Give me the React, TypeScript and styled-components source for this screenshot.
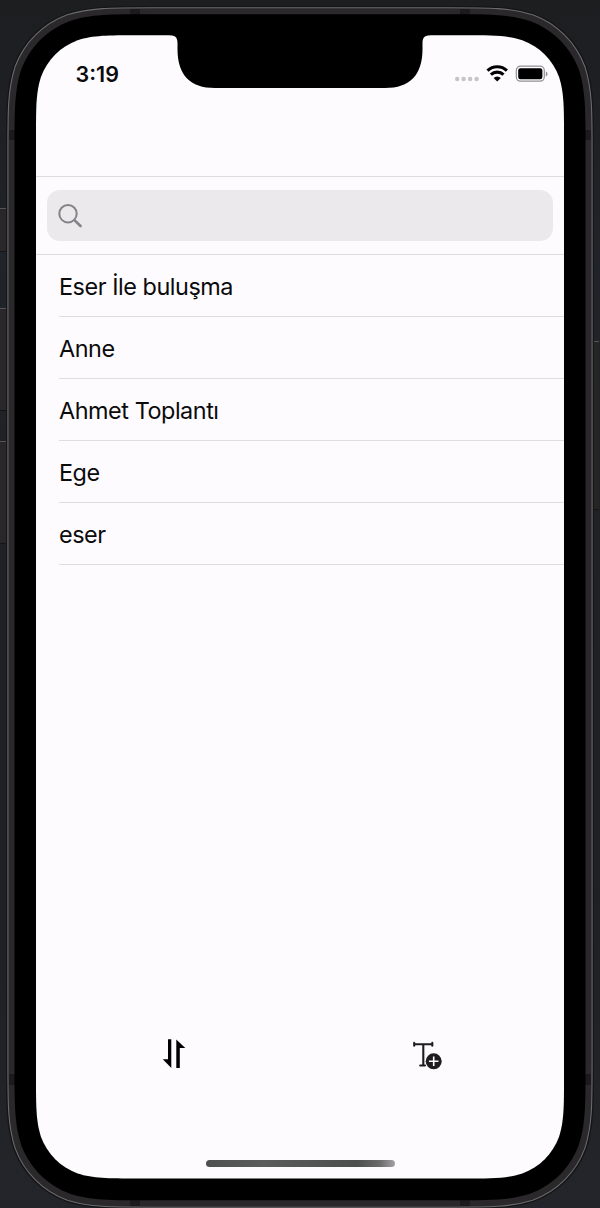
import React from "react";
import styled, { createGlobalStyle } from "styled-components";

const GlobalStyle = createGlobalStyle`
  * { box-sizing: border-box; }
  body { margin: 0; background: #202124; font-family: Inter, "Liberation Sans", sans-serif; }
`;

const Stage = styled.main`
  position: relative;
  display: flex;
  justify-content: center;
  width: 600px;
  height: 1208px;
  padding: 35px 36px 30px;
  overflow: hidden;
  background: linear-gradient(180deg, #1d1e20 0, #1e2023 120px, #202329 260px, #202124 560px, #1f2023 900px, #23252a 1208px);
`;

const Hardware = styled.svg`
  position: absolute;
  inset: 0;
`;

const Screen = styled.div`
  position: relative;
  display: flex;
  flex-direction: column;
  width: 528px;
  color: #0b0b0c;
`;

const StatusBar = styled.header`
  display: flex;
  justify-content: space-between;
  height: 141px;
  padding: 27px 16px 0 39.5px;
`;

const Time = styled.time`
  font-size: 21.5px;
  font-weight: 600;
  line-height: 24px;
`;

const SearchArea = styled.div`
  height: 79px;
  padding: 13.4px 11px;
  border-top: 1px solid #dedcdf;
  border-bottom: 1px solid #dedcdf;
`;

const SearchField = styled.div`
  display: flex;
  align-items: center;
  height: 50.5px;
  padding-left: 10px;
  border-radius: 13px;
  background: #ebe9eb;
`;

const List = styled.ul`
  flex: 1;
  margin: 0;
  padding: 0 0 0 23px;
  list-style: none;
`;

const Item = styled.li`
  display: flex;
  align-items: center;
  height: 62px;
  padding-top: 2px;
  border-bottom: 1px solid #dfdde0;
  font-size: 23.4px;
  letter-spacing: -0.45px;
`;

const Toolbar = styled.nav`
  display: flex;
  height: 121px;
  padding: 0 11px;
`;

const ToolButton = styled.button`
  display: flex;
  flex: 1;
  justify-content: center;
  align-items: flex-start;
  padding: 0;
  border: 0;
  background: none;
`;

const HomeIndicator = styled.div`
  align-self: center;
  width: 189px;
  height: 7px;
  margin-bottom: 11px;
  border-radius: 4px;
  background: linear-gradient(90deg, #4e504f, #5a5c5b 30%, #4c4e4d 80%, #6b6b6c 92%, #a3a2a4);
`;

const meetings = ["Eser İle buluşma", "Anne", "Ahmet Toplantı", "Ege", "eser"];

/** Rounded rectangle whose corners ease into the straight edges. */
function smoothRect(l: number, t: number, r: number, b: number, radius: number) {
  const corner = [
    [1.5287, 0], [1.0885, 0], [0.8684, 0], [0.6315, 0.0749],
    [0.3728, 0.1691], [0.1691, 0.3728], [0.0749, 0.6315],
    [0, 0.8684], [0, 1.0885], [0, 1.5287],
  ];
  const place = (points: number[][], x: number, y: number, sx: number, sy: number) =>
    points.map(([px, py]) => `${(x + sx * px * radius).toFixed(2)} ${(y + sy * py * radius).toFixed(2)}`);
  const back = [...corner].reverse();
  const runs = [
    place(corner, l, t, 1, 1),
    place(back, l, b, 1, -1),
    place(corner, r, b, -1, -1),
    place(back, r, t, -1, 1),
  ];
  return runs.map((p, i) => `${i ? "L" : "M"}${p[0]}C${p.slice(1).join(" ")}`).join("") + "Z";
}

function PhoneBody() {
  return (
    <Hardware width="600" height="1208" viewBox="0 0 600 1208">
      <g fill="#292729">
        <path d="M0 208H7V251H0ZM0 308H7V411H0ZM0 441H7V543H0Z" />
        <path d="M593 341H599V509H593Z" fill="#252524" />
      </g>
      <path d="M0 208.500H7M0 308.500H7M0 441.500H7M593 341.500H599" stroke="#555557" />
      <path d="M0 251.500H7M0 410.500H7M0 543.500H7M593 509.500H599" stroke="#151517" />
      <path d={smoothRect(7.5, 7.5, 592.5, 1207.5, 94)} fill="#2a282a" stroke="#141517" strokeWidth="3" />
      <path d={smoothRect(7.9, 7.7, 592.1, 1207.2, 94)} fill="#2a282a" stroke="#6b6b6c" strokeWidth="1.100" />
      <path
        d="M130 9H140V15H130ZM460 9H470V15H460ZM130 1200H140V1206H130ZM460 1200H470V1206H460ZM9 130H15V140H9ZM585 130H591V140H585ZM9 1074H15V1085H9ZM585 1074H591V1085H585Z"
        fill="#1c1a1c"
      />
      <path d={smoothRect(14.5, 14.3, 585.5, 1200.3, 88)} />
      <path d={smoothRect(36, 35.3, 564, 1178.4, 66)} fill="#fdfbfe" />
      <path d="M170 34V35.300C175 35.300 177.500 37.500 177.500 43V49C177.500 75 190 88 215 88H385C410 88 422.500 75 422.500 49V43C422.500 37.500 425 35.300 430 35.300V34Z" />
    </Hardware>
  );
}

export default function App() {
  return (
    <Stage>
      <GlobalStyle />
      <PhoneBody />
      <Screen>
        <StatusBar>
          <Time>3:19</Time>
          <svg width="94" height="24" viewBox="0 0 94 24">
            <g fill="#c6c4c7">
              <circle cx="3.200" cy="17" r="2.200" />
              <circle cx="9.600" cy="17" r="2.200" />
              <circle cx="16.100" cy="17" r="2.200" />
              <circle cx="22.600" cy="17" r="2.200" />
            </g>
            <g fill="none" stroke="#000" strokeWidth="3.100">
              <path d="M33.500 8.700A14 14 0 0 1 52.900 8.700" />
              <path d="M36.900 12.700A9 9 0 0 1 49.500 12.700" />
            </g>
            <path d="M43.200 19.600L39.600 16A4.900 4.900 0 0 1 46.800 16Z" />
            <rect x="62.300" y="4.200" width="28" height="15" rx="4.200" fill="none" stroke="#929193" strokeWidth="1.200" />
            <rect x="64.200" y="6.300" width="24.200" height="10.900" rx="2.300" />
            <path d="M91.800 9.400c2.300.8 2.300 4.200 0 5z" fill="#929193" />
          </svg>
        </StatusBar>
        <SearchArea>
          <SearchField>
            <svg width="26" height="26" viewBox="0 0 26 26" fill="none" stroke="#858387" strokeLinecap="round">
              <circle cx="11" cy="10.700" r="8.700" strokeWidth="2" />
              <path d="M17.700 17.400l5.800 5.600" strokeWidth="2.700" />
            </svg>
          </SearchField>
        </SearchArea>
        <List>
          {meetings.map((m) => (
            <Item key={m}>{m}</Item>
          ))}
        </List>
        <Toolbar>
          <ToolButton aria-label="Sort">
            <svg width="25" height="30" viewBox="0 0 25 30">
              <path d="M7 .3H10.300V29L1.800 20.300H7ZM15.300 29V.6L24.300 9H18.800V29Z" />
            </svg>
          </ToolButton>
          <ToolButton aria-label="Add text">
            <svg width="31" height="31" viewBox="0 0 31 31" fill="none" stroke="#1d1c1f">
              <path d="M3 5.200H21.500M12.300 5.200V26.500" strokeWidth="2.100" />
              <path d="M3.200 3.900V6.700M21.300 3.900V6.700M9.200 26.500H14" strokeWidth="2.100" strokeLinecap="round" />
              <circle cx="22.700" cy="22.300" r="8" fill="#1d1c1f" stroke="none" />
              <path d="M22.700 17.500V27.100M17.900 22.300H27.500" stroke="#fdfbfe" strokeWidth="1.600" />
            </svg>
          </ToolButton>
        </Toolbar>
        <HomeIndicator />
      </Screen>
    </Stage>
  );
}
